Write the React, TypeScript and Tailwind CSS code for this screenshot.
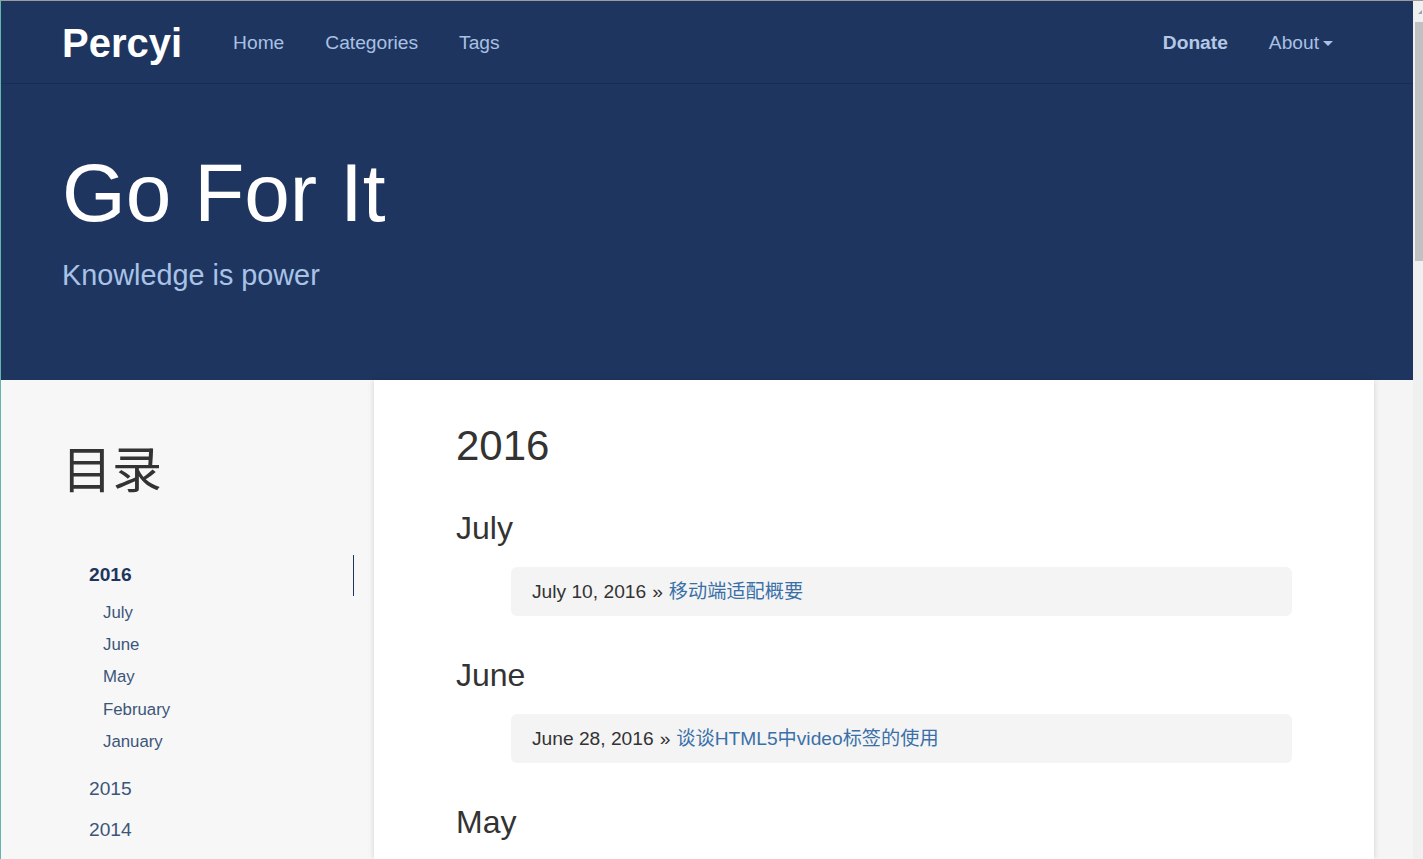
import React from 'react'

const font = "font-['Liberation_Sans','Noto_Sans_CJK_SC',sans-serif]"

const months = ['July', 'June', 'May', 'February', 'January']

const posts = [
  { month: 'July', date: 'July 10, 2016', title: '移动端适配概要' },
  { month: 'June', date: 'June 28, 2016', title: '谈谈HTML5中video标签的使用' },
  { month: 'May', date: 'May 2016', title: '' },
]

function Navbar() {
  return (
    <nav className="flex h-[83px] shrink-0 items-center justify-between border-b border-[#172d52] bg-[#1e365f] pl-[61px] pr-[80px] pt-[2px]">
      <div className="flex items-center">
        <a className="text-[40px] font-bold leading-none text-white">Percyi</a>
        <ul className="ml-[51px] flex items-center gap-[41px] text-[19.2px] text-[#a9c1e4]">
          <li>Home</li>
          <li>Categories</li>
          <li>Tags</li>
        </ul>
      </div>
      <ul className="flex items-center gap-[41px] text-[19.2px] text-[#a9c1e4]">
        <li className="font-bold text-[#b4c8e6]">Donate</li>
        <li className="flex items-center">
          About
          <span className="ml-[4px] mt-[2px] h-0 w-0 border-x-[5px] border-t-[5px] border-x-transparent border-t-[#a9c1e4]" />
        </li>
      </ul>
    </nav>
  )
}

function Hero() {
  return (
    <header className="h-[296px] shrink-0 bg-[#1e365f] pl-[61px] pt-[68px]">
      <h1 className="text-[82px] leading-none text-white">Go For It</h1>
      <p className="mt-[27px] text-[28.8px] leading-none text-[#a9c3e8]">Knowledge is power</p>
    </header>
  )
}

function Sidebar() {
  return (
    <aside className="w-[373px] shrink-0 bg-[#f7f7f7] pl-[61px] pr-[20px] pt-[63px]">
      <h2 className="flex h-[56px] items-center text-[50px] leading-none text-[#333]">目录</h2>
      <ul className="mt-[56px] w-[292px]">
        <li>
          <div className="flex h-[41px] items-center border-r border-[#1e365f] pl-[27px] text-[19.2px] font-bold text-[#1e365f]">
            2016
          </div>
          <ul className="pb-[11px]">
            {months.map((m) => (
              <li key={m} className="flex h-[32.4px] items-center pl-[41px] text-[16.8px] text-[#3b5579]">
                {m}
              </li>
            ))}
          </ul>
        </li>
        <li className="flex h-[41px] items-center pl-[27px] text-[19.2px] text-[#3b5579]">2015</li>
        <li className="flex h-[41px] items-center pl-[27px] text-[19.2px] text-[#3b5579]">2014</li>
      </ul>
    </aside>
  )
}

function Archive() {
  return (
    <main className="w-[1000px] shrink-0 bg-white px-[82px] pt-[43px] shadow-[0_0_6px_rgba(0,0,0,0.15)]">
      <h2 className="text-[42px] leading-[46px] text-[#333]">2016</h2>
      {posts.map((p) => (
        <section key={p.month}>
          <h3 className="mt-[41px] text-[32px] leading-[36px] text-[#333]">{p.month}</h3>
          {p.title && (
            <div className="ml-[55px] mt-[21px] flex h-[49px] items-center rounded-[6px] bg-[#f4f4f4] pl-[21px] pt-[1px] text-[19.2px] text-[#333]">
              <span>{p.date}</span>
              <span className="mx-[6px]">»</span>
              <a className="text-[#3a70a8]">{p.title}</a>
            </div>
          )}
        </section>
      ))}
    </main>
  )
}

function Scrollbar() {
  return (
    <div className="flex w-[10px] shrink-0 flex-col bg-[#f0f0f0]">
      <div className="flex h-[21px] items-center justify-end pr-[1px]">
        <span className="h-0 w-0 border-b-[4px] border-l-[4px] border-b-[#a3a3a3] border-l-transparent" />
      </div>
      <div className="ml-[2px] h-[239px] bg-[#c1c1c1]" />
    </div>
  )
}

export default function App() {
  return (
    <div className={`flex h-[859px] w-[1423px] overflow-hidden border-l border-t border-l-[#63b5ad] border-t-[#9c9c9c] ${font}`}>
      <div className="flex min-w-0 flex-1 flex-col overflow-hidden">
        <Navbar />
        <Hero />
        <div className="flex flex-1 bg-[#f5f5f5]">
          <Sidebar />
          <Archive />
        </div>
      </div>
      <Scrollbar />
    </div>
  )
}
